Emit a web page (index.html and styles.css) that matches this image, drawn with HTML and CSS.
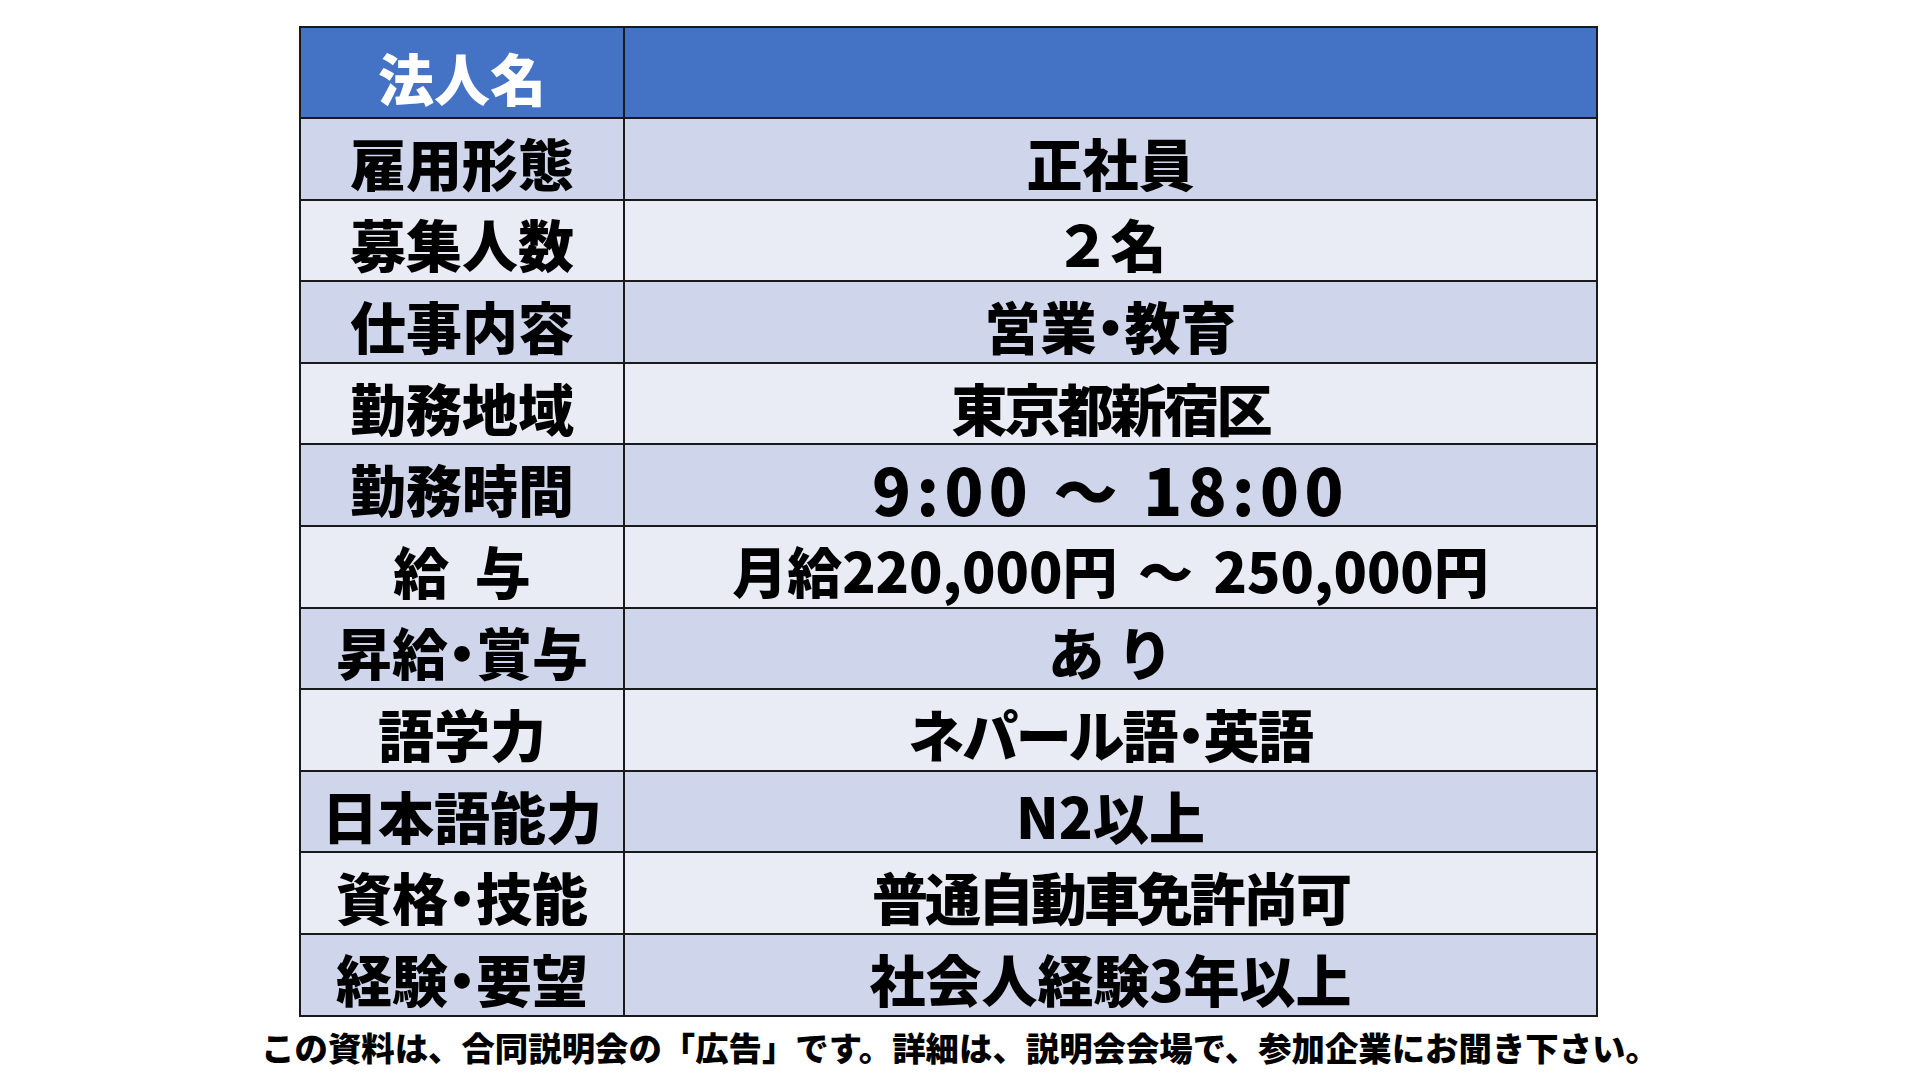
FILE: index.html
```html
<!DOCTYPE html>
<html lang="ja">
<head>
<meta charset="utf-8">
<title>求人票</title>
<link rel="stylesheet" href="styles.css">
</head>
<body>
<div class="page">
  <table class="job">
    <colgroup><col class="c-label"><col class="c-value"></colgroup>
    <tr class="head"><th>法人名</th><td></td></tr>
    <tr class="odd"><th>雇用形態</th><td>正社員</td></tr>
    <tr class="even"><th>募集人数</th><td class="full">２名</td></tr>
    <tr class="odd"><th>仕事内容</th><td>営業・教育</td></tr>
    <tr class="even"><th>勤務地域</th><td class="tight">東京都新宿区</td></tr>
    <tr class="odd"><th>勤務時間</th><td class="time">9:00 ～ 18:00</td></tr>
    <tr class="even"><th>給&nbsp;&nbsp;与</th><td class="salary">月給220,000円 ～ 250,000円</td></tr>
    <tr class="odd"><th>昇給・賞与</th><td class="full">あ り</td></tr>
    <tr class="even"><th>語学力</th><td class="tight-s">ネパール語・英語</td></tr>
    <tr class="odd"><th>日本語能力</th><td>N2以上</td></tr>
    <tr class="even"><th>資格・技能</th><td class="tight">普通自動車免許尚可</td></tr>
    <tr class="odd"><th>経験・要望</th><td>社会人経験3年以上</td></tr>
  </table>
  <p class="note">この資料は、合同説明会の「広告」です。詳細は、説明会会場で、参加企業にお聞き下さい。</p>
</div>
</body>
</html>
```

FILE: styles.css
```css
html, body {
  margin: 0;
  padding: 0;
  background: #ffffff;
}

body {
  width: 1920px;
  height: 1080px;
  overflow: hidden;
  font-family: "Noto Sans CJK JP", "Noto Sans", sans-serif;
  font-weight: 900;
  color: #000000;
}

.page {
  padding-top: 26px;
}

.job {
  margin-left: 299px;
  width: 1297px;
  border-collapse: collapse;
  border: 2px solid #111111;
  table-layout: fixed;
  font-feature-settings: "palt";
}

.c-label { width: 324px; }
.c-value { width: 973px; }

.job th,
.job td {
  border: 2px solid #1a1a1a;
  padding: 6px 0 0 0;
  text-align: center;
  vertical-align: middle;
  font-size: 56px;
  font-weight: 900;
  line-height: 1;
  white-space: nowrap;
  height: 81.6px;
  box-sizing: border-box;
}

.job tr.head th,
.job tr.head td {
  height: 91px;
  background: #4472c4;
  color: #ffffff;
  padding-top: 8px;
}

.job tr.odd th,
.job tr.odd td {
  background: #cfd5ea;
}

.job tr.even th,
.job tr.even td {
  background: #e9ebf5;
}

.job td.full {
  font-feature-settings: normal;
}

.job td.tight {
  letter-spacing: -3px;
}

.job td.tight-s {
  letter-spacing: -1.5px;
}

.job td.time {
  font-size: 64px;
  letter-spacing: 5.5px;
  font-feature-settings: normal;
}

.job td.salary {
  font-size: 55px;
  word-spacing: 8px;
  font-feature-settings: normal;
}

.note {
  margin: 10px 0 0 0;
  text-align: center;
  font-size: 33.4px;
  font-weight: 900;
  line-height: 1.2;
  white-space: nowrap;
}
```
